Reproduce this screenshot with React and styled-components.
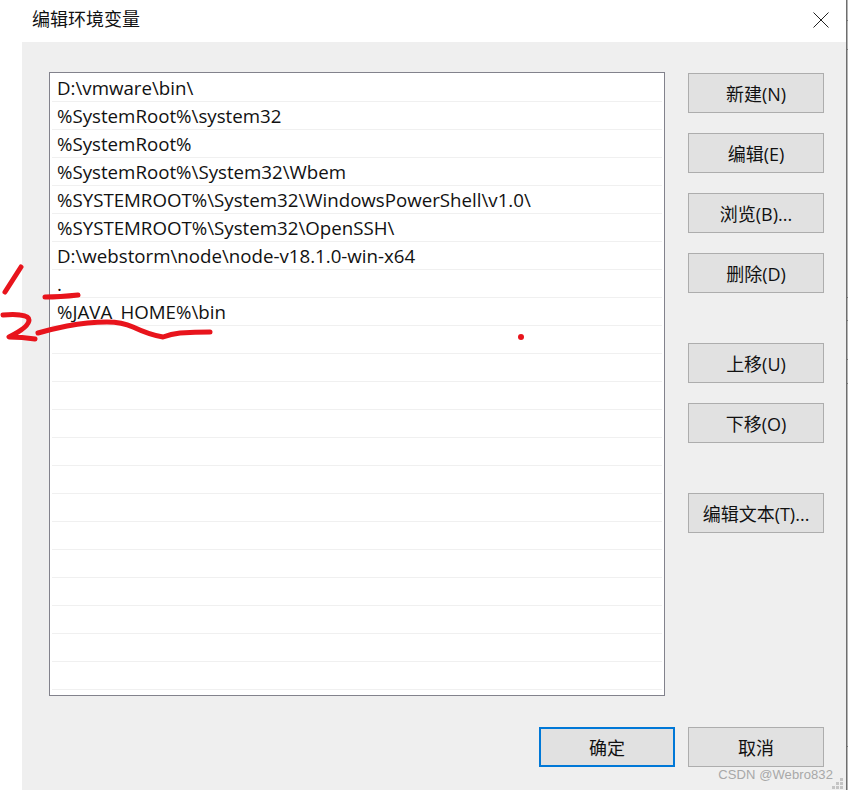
import React from "react";
import styled, { createGlobalStyle } from "styled-components";

const GlobalStyle = createGlobalStyle`
  html, body {
    margin: 0;
    padding: 0;
    background: #fff;
  }
  body {
    font-family: "Open Sans", "Noto Sans CJK SC", sans-serif;
  }
`;

const paths = [
  "D:\\vmware\\bin\\",
  "%SystemRoot%\\system32",
  "%SystemRoot%",
  "%SystemRoot%\\System32\\Wbem",
  "%SYSTEMROOT%\\System32\\WindowsPowerShell\\v1.0\\",
  "%SYSTEMROOT%\\System32\\OpenSSH\\",
  "D:\\webstorm\\node\\node-v18.1.0-win-x64",
  ".",
  "%JAVA_HOME%\\bin",
];
const rows = [...paths, ...Array(13).fill("")];
const edgeTicks = [20, 49, 297, 320, 359, 383, 746];

const App = () => {
  return (
    <Page>
      <GlobalStyle />
      <Dialog>
        <TitleBar>
          <Title>编辑环境变量</Title>
          <svg width="18" height="18" viewBox="0 0 18 18">
            <path d="M1.5 1.5 L16.5 16.5 M16.5 1.5 L1.5 16.5" stroke="#222" strokeWidth="1" fill="none" />
          </svg>
        </TitleBar>
        <Body>
          <Main>
            <PathList>
              {rows.map((text, i) => (
                <PathRow key={i}>{text}</PathRow>
              ))}
            </PathList>
            <SideButtons>
              <Button>新建(N)</Button>
              <Button>编辑(E)</Button>
              <Button>浏览(B)...</Button>
              <Button>删除(D)</Button>
              <Button $top={30}>上移(U)</Button>
              <Button>下移(O)</Button>
              <Button $top={30}>编辑文本(T)...</Button>
            </SideButtons>
          </Main>
          <Footer>
            <Button $primary>确定</Button>
            <Button>取消</Button>
          </Footer>
        </Body>
      </Dialog>
      <Edge>
        {edgeTicks.map((y) => (
          <EdgeTick key={y} $y={y} />
        ))}
      </Edge>
      <Scribbles width="230" height="100" viewBox="0 0 230 100">
        <g fill="none" stroke="#e8141c" strokeWidth="5" strokeLinecap="round" strokeLinejoin="round">
          <path d="M21 7 Q14 18 5 32" />
          <path d="M45 37 Q60 37 78 35" />
          <path d="M3 55 Q14 54 20 55 Q29 56 29 60 Q29 67 9 77 Q22 77 35 79" />
          <path d="M38 73 Q52 69 67 66 Q88 62 107 62 Q122 62 133 67 Q150 75 163 77 Q171 74 180 73 Q195 72 210 72" />
        </g>
      </Scribbles>
      <Dot />
      <Watermark>CSDN @Webro832</Watermark>
      <Grip width="12" height="12" viewBox="0 0 12 12">
        <g fill="#c4c4c4">
          <rect x="8" y="0" width="3" height="3" />
          <rect x="4" y="4" width="3" height="3" />
          <rect x="8" y="4" width="3" height="3" />
          <rect x="0" y="8" width="3" height="3" />
          <rect x="4" y="8" width="3" height="3" />
          <rect x="8" y="8" width="3" height="3" />
        </g>
      </Grip>
    </Page>
  );
};

export default App;

const Page = styled.div`
  position: relative;
  display: flex;
  width: 848px;
  height: 790px;
  overflow: hidden;
  background: #fff;
  padding-left: 22px;
  box-sizing: border-box;
`;

const Dialog = styled.div`
  flex: 1;
  display: flex;
  flex-direction: column;
  height: 100%;
`;

const Edge = styled.div`
  position: relative;
  width: 2px;
  box-sizing: border-box;
  border-left: 1px solid #6e6e6e;
  background: #b4b4b4;
`;

const EdgeTick = styled.div`
  position: absolute;
  left: 0;
  top: ${(p) => p.$y}px;
  width: 1px;
  height: 1px;
  background: #7a7a7a;
`;

const TitleBar = styled.div`
  display: flex;
  align-items: center;
  justify-content: space-between;
  height: 42px;
  padding: 0 16px 3px 10px;
  box-sizing: border-box;
  background: #fff;
`;

const Title = styled.div`
  font-size: 18px;
  line-height: 24px;
  margin-top: -1px;
  color: #111;
`;

const Body = styled.div`
  flex: 1;
  display: flex;
  flex-direction: column;
  justify-content: space-between;
  background: #efefef;
  padding: 30px 22px 23px 27px;
  box-sizing: border-box;
`;

const Main = styled.div`
  display: flex;
  justify-content: space-between;
  align-items: flex-start;
`;

const PathList = styled.div`
  width: 616px;
  height: 624px;
  box-sizing: border-box;
  border: 1px solid #82828c;
  background: #fff;
  padding: 1px 2px 0;
  overflow: hidden;
`;

const PathRow = styled.div`
  height: 28px;
  box-sizing: border-box;
  border-bottom: 1px solid #f0f0f0;
  padding-left: 5px;
  font-size: 18.7px;
  line-height: 27px;
  color: #111;
  white-space: pre;
`;

const SideButtons = styled.div`
  display: flex;
  flex-direction: column;
  gap: 20px;
  padding-top: 1px;
`;

const Button = styled.div`
  display: flex;
  align-items: center;
  justify-content: center;
  width: 136px;
  height: 40px;
  box-sizing: border-box;
  margin-top: ${(p) => p.$top || 0}px;
  padding-bottom: 1px;
  border: ${(p) => (p.$primary ? "2px solid #0078d7" : "1px solid #adadad")};
  background: #e1e1e1;
  font-size: 18px;
  color: #111;
`;

const Footer = styled.div`
  display: flex;
  justify-content: flex-end;
  gap: 13px;
`;

const Scribbles = styled.svg`
  position: absolute;
  left: 0;
  top: 260px;
`;

const Dot = styled.div`
  position: absolute;
  left: 518px;
  top: 334px;
  width: 6px;
  height: 6px;
  border-radius: 50%;
  background: #e8141c;
`;

const Watermark = styled.div`
  position: absolute;
  right: 15px;
  top: 767px;
  font-family: "Liberation Sans", sans-serif;
  font-size: 13px;
  line-height: 16px;
  color: #a8a8a8;
  letter-spacing: 0.1px;
`;

const Grip = styled.svg`
  position: absolute;
  left: 832px;
  top: 778px;
`;
